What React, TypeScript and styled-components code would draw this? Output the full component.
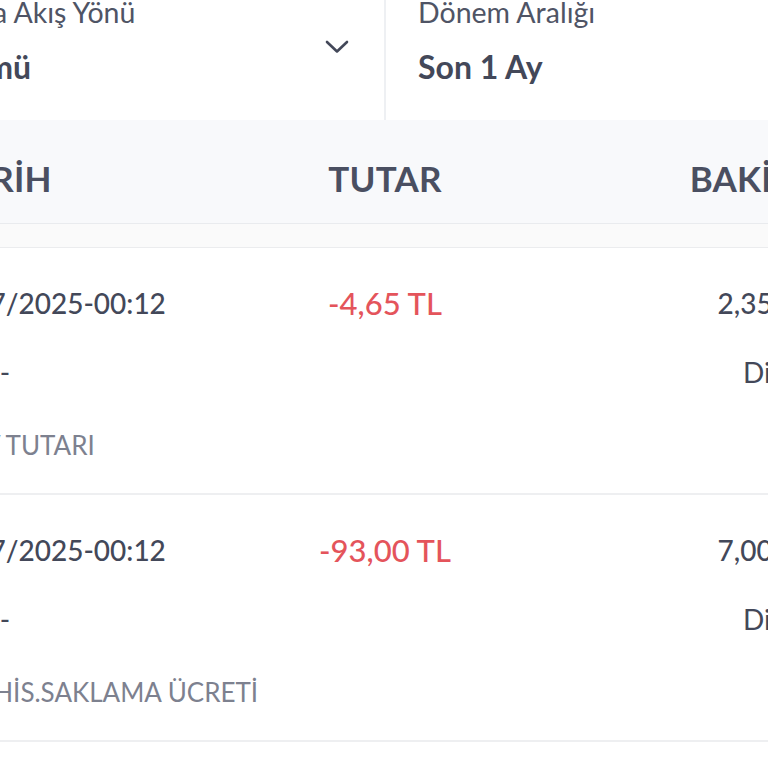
import React from 'react';
import styled, { createGlobalStyle } from 'styled-components';

const GlobalStyle = createGlobalStyle`
  html, body {
    margin: 0;
    padding: 0;
    background: #ffffff;
    overflow: hidden;
  }
  body {
    font-family: 'Lato', 'Noto Sans', sans-serif;
    color: #434859;
  }
`;

interface Movement {
  date: string;
  info: string;
  description: string;
  amount: string;
  balance: string;
  kind: string;
}

const movements: Movement[] = [
  {
    date: '01/07/2025-00:12',
    info: 'Kodu -',
    description: 'BSMV TUTARI',
    amount: '-4,65 TL',
    balance: '2,35 TL',
    kind: 'Diğer',
  },
  {
    date: '01/07/2025-00:12',
    info: 'Kodu -',
    description: 'MKK HİS.SAKLAMA ÜCRETİ',
    amount: '-93,00 TL',
    balance: '7,00 TL',
    kind: 'Diğer',
  },
];

const ChevronDown = () => (
  <svg width="24" height="14" viewBox="0 0 24 14" fill="none">
    <path d="M2 2L12 11.5L22 2" stroke="#434859" strokeWidth="2.6" strokeLinecap="round" strokeLinejoin="round" />
  </svg>
);

const App: React.FC = () => {
  return (
    <>
      <GlobalStyle />
      <Page>
        <Filters>
          <FilterBox>
            <FilterText>
              <FilterLabel>Para Akış Yönü</FilterLabel>
              <FilterValue>Tümü</FilterValue>
            </FilterText>
            <ChevronWrap>
              <ChevronDown />
            </ChevronWrap>
          </FilterBox>
          <FilterBox $divider>
            <FilterText>
              <FilterLabel>Dönem Aralığı</FilterLabel>
              <FilterValue>Son 1 Ay</FilterValue>
            </FilterText>
          </FilterBox>
        </Filters>

        <TableHead>
          <HeadCell $align="left" $shift={-7}>TARİH</HeadCell>
          <HeadCell $align="center">TUTAR</HeadCell>
          <HeadCell $align="right">BAKİYE</HeadCell>
        </TableHead>
        <Spacer />

        {movements.map((m, i) => (
          <Row key={i}>
            <Column $align="flex-start" $shift={-27}>
              <DateText>{m.date}</DateText>
              <InfoText>{m.info}</InfoText>
              <Description>{m.description}</Description>
            </Column>
            <Column $align="center">
              <Amount>{m.amount}</Amount>
            </Column>
            <Column $align="flex-end" $shift={-5}>
              <DateText>{m.balance}</DateText>
              <InfoText>{m.kind}</InfoText>
            </Column>
          </Row>
        ))}
      </Page>
    </>
  );
};

const Page = styled.div`
  width: 930px;
  margin-left: -80px;
`;

const Filters = styled.div`
  display: grid;
  grid-template-columns: 465px 465px;
  height: 120px;
  background: #ffffff;
`;

const FilterBox = styled.div<{ $divider?: boolean }>`
  display: flex;
  align-items: flex-start;
  justify-content: space-between;
  padding: 0 36px 0 32px;
  border-left: ${(p) => (p.$divider ? '2px solid #eef0f3' : 'none')};
  margin-left: ${(p) => (p.$divider ? '-1px' : '0')};
`;

const FilterText = styled.div`
  display: flex;
  flex-direction: column;
  margin-top: -6px;
`;

const FilterLabel = styled.span`
  font-size: 28.5px;
  line-height: 36px;
  color: #4f5465;
`;

const FilterValue = styled.span`
  margin-top: 17px;
  font-size: 32px;
  line-height: 40px;
  font-weight: 700;
  color: #434859;
`;

const ChevronWrap = styled.div`
  display: flex;
  margin-top: 40px;
`;

const TableHead = styled.div`
  display: grid;
  grid-template-columns: minmax(0, 1fr) minmax(0, 1fr) minmax(0, 1fr);
  align-items: center;
  height: 104px;
  padding: 12px 35px 0;
  box-sizing: border-box;
  background: #f8f9fb;
  border-bottom: 1px solid #e9ebee;
`;

const HeadCell = styled.div<{ $align: 'left' | 'center' | 'right'; $shift?: number }>`
  text-align: ${(p) => p.$align};
  margin-left: ${(p) => p.$shift ?? 0}px;
  font-size: 35px;
  font-weight: 700;
  letter-spacing: 0.2px;
  color: #4a4f61;
  white-space: nowrap;
`;

const Spacer = styled.div`
  height: 23px;
  background: #fafafa;
  border-bottom: 1px solid #ebecee;
`;

const Row = styled.div`
  display: grid;
  grid-template-columns: minmax(0, 1fr) minmax(0, 1fr) minmax(0, 1fr);
  height: 247px;
  padding: 37px 35px 0;
  box-sizing: border-box;
  border-bottom: 2px solid #eeeff1;
`;

const Column = styled.div<{ $align: string; $shift?: number }>`
  display: flex;
  flex-direction: column;
  align-items: ${(p) => p.$align};
  margin-left: ${(p) => (p.$align === 'flex-end' ? 0 : p.$shift ?? 0)}px;
  margin-right: ${(p) => (p.$align === 'flex-end' ? -(p.$shift ?? 0) : 0)}px;
`;

const DateText = styled.span`
  font-size: 28px;
  line-height: 36px;
  font-weight: 500;
  color: #434859;
  white-space: nowrap;
`;

const InfoText = styled.span`
  margin-top: 33px;
  font-size: 28px;
  line-height: 36px;
  color: #434859;
  white-space: nowrap;
`;

const Description = styled.span`
  margin-top: 38px;
  font-size: 26px;
  line-height: 34px;
  color: #7d818f;
  white-space: nowrap;
`;

const Amount = styled.span`
  font-size: 31px;
  line-height: 36px;
  font-weight: 500;
  color: #e4545b;
  white-space: nowrap;
`;

export default App;
